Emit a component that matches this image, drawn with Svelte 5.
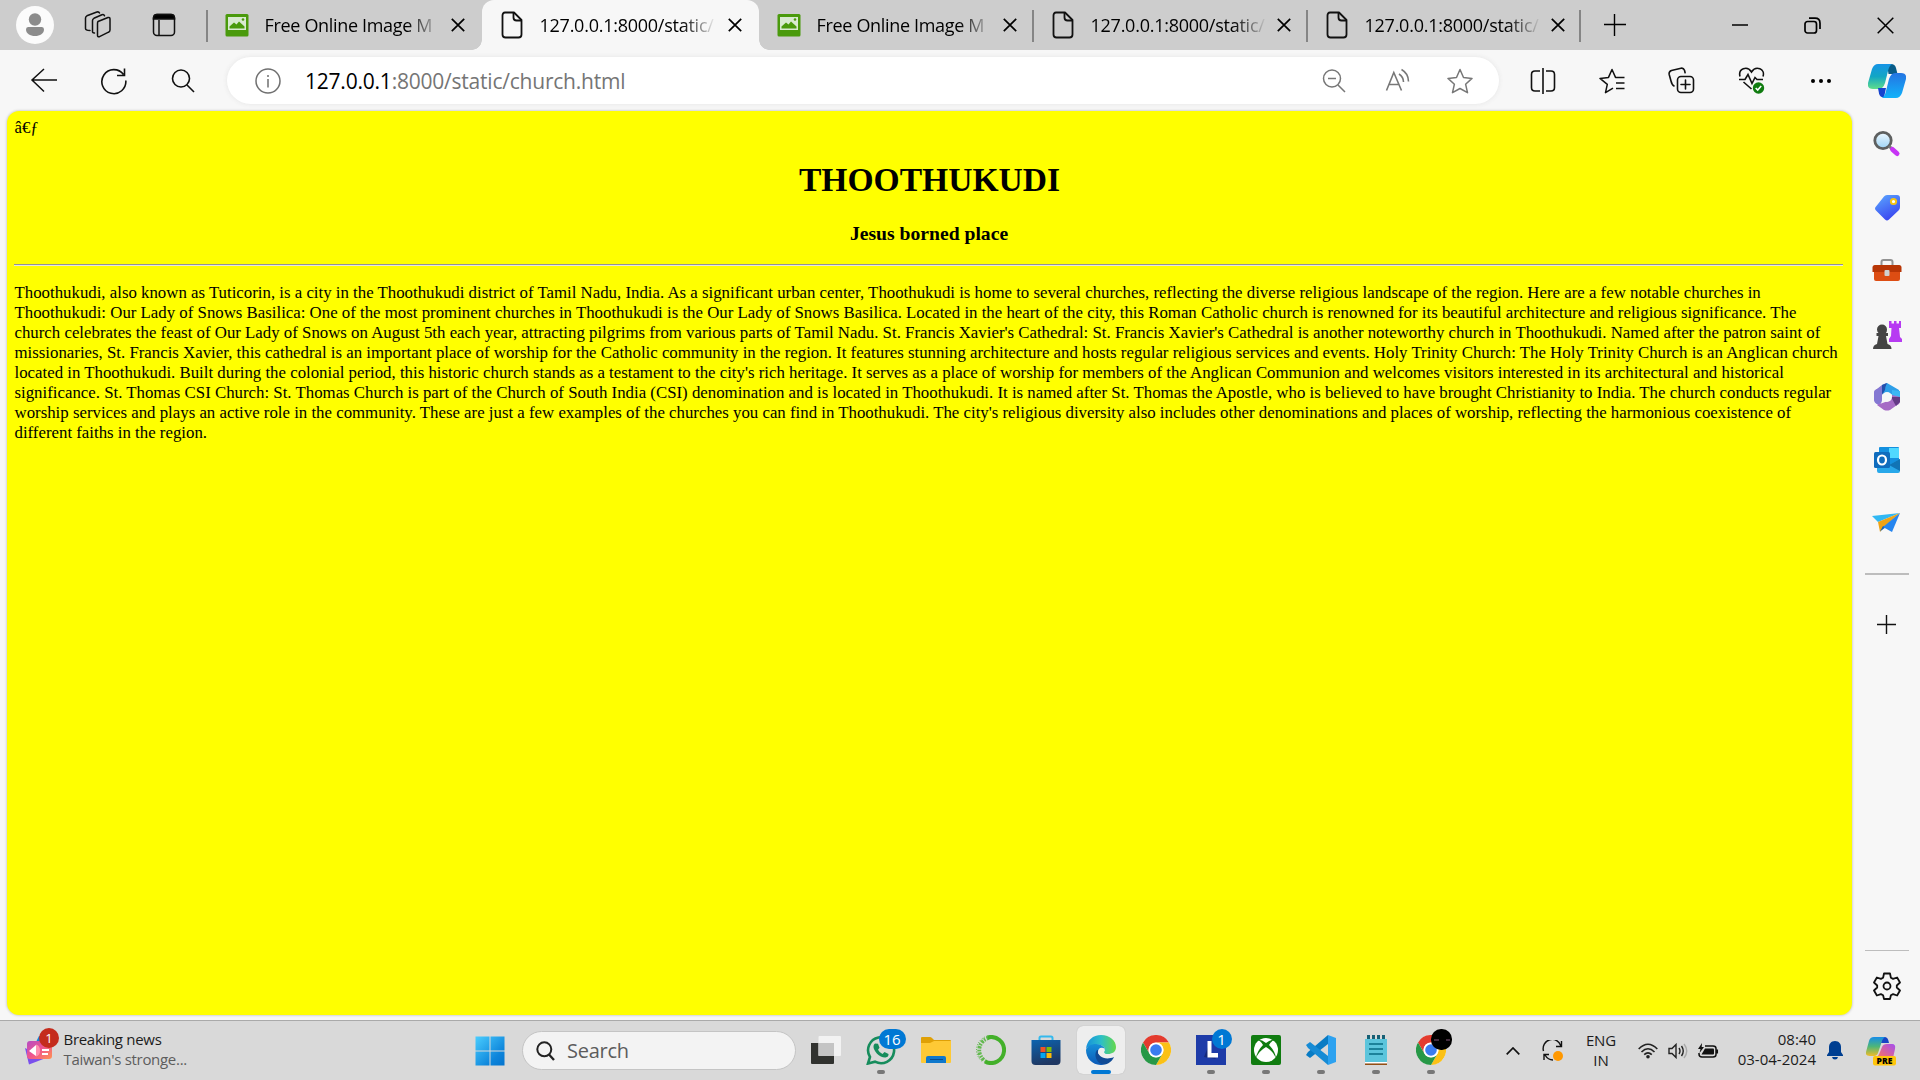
<script>
  const tabs = [
    { title: 'Free Online Image M', kind: 'image', active: false },
    { title: '127.0.0.1:8000/static/', kind: 'doc', active: true },
    { title: 'Free Online Image M', kind: 'image', active: false },
    { title: '127.0.0.1:8000/static/', kind: 'doc', active: false },
    { title: '127.0.0.1:8000/static/', kind: 'doc', active: false }
  ];
  const lines = [
    'Thoothukudi, also known as Tuticorin, is a city in the Thoothukudi district of Tamil Nadu, India. As a significant urban center, Thoothukudi is home to several churches, reflecting the diverse religious landscape of the region. Here are a few notable churches in',
    'Thoothukudi: Our Lady of Snows Basilica: One of the most prominent churches in Thoothukudi is the Our Lady of Snows Basilica. Located in the heart of the city, this Roman Catholic church is renowned for its beautiful architecture and religious significance. The',
    "church celebrates the feast of Our Lady of Snows on August 5th each year, attracting pilgrims from various parts of Tamil Nadu. St. Francis Xavier's Cathedral: St. Francis Xavier's Cathedral is another noteworthy church in Thoothukudi. Named after the patron saint of",
    'missionaries, St. Francis Xavier, this cathedral is an important place of worship for the Catholic community in the region. It features stunning architecture and hosts regular religious services and events. Holy Trinity Church: The Holy Trinity Church is an Anglican church',
    "located in Thoothukudi. Built during the colonial period, this historic church stands as a testament to the city's rich heritage. It serves as a place of worship for members of the Anglican Communion and welcomes visitors interested in its architectural and historical",
    'significance. St. Thomas CSI Church: St. Thomas Church is part of the Church of South India (CSI) denomination and is located in Thoothukudi. It is named after St. Thomas the Apostle, who is believed to have brought Christianity to India. The church conducts regular',
    "worship services and plays an active role in the community. These are just a few examples of the churches you can find in Thoothukudi. The city's religious diversity also includes other denominations and places of worship, reflecting the harmonious coexistence of",
    'different faiths in the region.'
  ];
  const apps = ['view', 'whatsapp', 'files', 'anaconda', 'store', 'edge', 'chrome', 'lapp', 'xbox', 'code', 'notes', 'chrome2'];
  const running = ['whatsapp', 'lapp', 'xbox', 'code', 'notes', 'chrome2'];
  const side = ['search', 'tag', 'case', 'chess', 'm365', 'outlook', 'plane'];
</script>

{#snippet chromeLogo()}
  <circle cx="15" cy="15" r="15" fill="#fff" />
  <path d="M2 7.5A15 15 0 0 1 28 7.500H15A7.500 7.500 0 0 0 8.500 18.750Z" fill="#e33b2e" />
  <path d="M28 7.500A15 15 0 0 1 15 30L21.500 18.750A7.500 7.500 0 0 0 15 7.500Z" fill="#fbc116" />
  <path d="M2 7.500A15 15 0 0 0 15 30L21.500 18.750A7.500 7.500 0 0 1 8.500 18.750Z" fill="#279847" />
  <circle cx="15" cy="15" r="7.300" fill="#fff" />
  <circle cx="15" cy="15" r="5.800" fill="#3a7cf0" />
{/snippet}

<div class="screen">
  <header class="strip">
    <div class="slot profile">
      <svg width="38" height="38" viewBox="0 0 38 38"><circle cx="19" cy="19" r="19" fill="#fbfbfb" /><circle cx="19" cy="13.500" r="6.200" fill="#8c8c8c" /><path d="M12 21h14q2 0 2 2.500c0 4-4 6.500-9 6.500s-9-2.500-9-6.500q0-2.500 2-2.500z" fill="#8c8c8c" /></svg>
    </div>
    <div class="slot spaces">
      <svg width="28" height="28" viewBox="0 0 28 28" fill="none" stroke="#111" stroke-width="1.500" stroke-linejoin="round" stroke-linecap="round">
        <path d="M14 10.500l10-4q2-.5 2 1.500v11q0 1.500-1.500 2.200l-9 4.500q-2 .6-2-1.500v-11.500q0-1.500.5-2.200z" />
        <path d="M10.500 22q-2 .2-2-1.600V9.500q0-1.500 1.400-2.200l8-3.600q2-.7 2.600 1" /><path d="M6 19.500q-4.500 0-4.500-2V7q0-1.500 1.400-2.200l10-3.800q2-.5 2.600 1" />
      </svg>
    </div>
    <div class="slot actions">
      <svg width="24" height="24" viewBox="0 0 24 24" fill="none" stroke="#111" stroke-width="1.500"><rect x="1.500" y="1.500" width="21" height="21" rx="3.500" /><path d="M1.500 6V5q0-3.500 3.500-3.500h14q3.500 0 3.500 3.500v1z" fill="#000" /><path d="M7 7v15" /></svg>
    </div>
    {#each tabs as tab, i}
      <div class="tab" class:active={tab.active} class:rule={i !== 1 && i !== 2}>
        {#if tab.kind === 'image'}
          <svg class="fav" width="24" height="24" viewBox="0 0 24 24"><rect x=".5" y="1" width="23" height="22.500" rx="1.500" fill="#4a9a0c" /><path d="M3 4h18v13H3z" fill="#d8ead0" /><path d="M4.500 15.500v-2l4.500-4 2.500 2 2.500-3 5.500 5v2z" fill="#4a9a0c" /><circle cx="18" cy="6.500" r="1.300" fill="#4a9a0c" /></svg>
        {:else}
          <svg class="fav" width="24" height="28" viewBox="0 0 24 28" fill="none" stroke="#111" stroke-width="1.800" stroke-linejoin="round"><path d="M5 1.500h9l7.500 7.500v14.500q0 3-3 3H5.500q-3 0-3-3v-19q0-3 2.500-3z" /><path d="M13.500 1.500v5q0 3 3 3h5" /></svg>
        {/if}
        <span class="title" class:addr={tab.kind === 'doc'}>{tab.title}</span>
        <svg class="x" width="14" height="14" viewBox="0 0 14 14" stroke="#000" stroke-width="1.700"><path d="M.8.8l12.400 12.400M13.200.8L.8 13.200" /></svg>
      </div>
    {/each}
    <div class="slot newtab"><svg width="22" height="22" viewBox="0 0 22 22" stroke="#000" stroke-width="1.400"><path d="M0 10.500h22M10.500 0v22" /></svg></div>
    <div class="wins">
      <svg width="16" height="16" viewBox="0 0 16 16" stroke="#000" stroke-width="1.500"><path d="M0 8h16" /></svg>
      <svg width="17" height="17" viewBox="0 0 17 17" fill="none" stroke="#000" stroke-width="1.700"><rect x="1" y="4.500" width="11.500" height="11.500" rx="2.500" /><path d="M5 1.200h6q5 0 5 5V12" /></svg>
      <svg width="17" height="17" viewBox="0 0 17 17" stroke="#000" stroke-width="1.500"><path d="M.7.7l15.600 15.600M16.300.7L.7 16.300" /></svg>
    </div>
  </header>

  <div class="toolbar">
    <div class="nav">
      <svg width="28" height="26" viewBox="0 0 28 26" fill="none" stroke="#111" stroke-width="1.500"><path d="M27 12H2M14 1L2 12 14 23.500" /></svg>
      <svg width="28" height="28" viewBox="0 0 28 28" fill="none" stroke="#111" stroke-width="1.600"><path d="M25.800 13.500A12 12 0 1 1 23.500 7.500M24.500 1.500v7h-7.500" /></svg>
      <svg width="26" height="26" viewBox="0 0 26 26" fill="none" stroke="#111" stroke-width="1.600"><circle cx="11" cy="10.500" r="8.500" /><path d="M17 17l7 7" /></svg>
    </div>
    <div class="omni">
      <svg width="26" height="26" viewBox="0 0 26 26" fill="none" stroke="#707070" stroke-width="1.500"><circle cx="13" cy="13" r="12" /><path d="M13 11v8.500M13 7v2" /></svg>
      <span class="url"><b>127.0.0.1</b>:8000/static/church.html</span>
      <div class="omni-icons">
        <svg width="26" height="26" viewBox="0 0 26 26" fill="none" stroke="#777" stroke-width="1.500"><circle cx="11" cy="10.500" r="8.500" /><path d="M17 17l7 7M7 10.500h8" /></svg>
        <svg width="26" height="26" viewBox="0 0 26 26" fill="none" stroke="#777" stroke-width="1.600"><path d="M2.500 22.500L9.800 4.500 17.500 22.500M5 16.500h10M15 6q4.500 3 4.500 8M17.500 1.500q7 4 7 12" /></svg>
        <svg width="26" height="26" viewBox="0 0 26 26" fill="none" stroke="#777" stroke-width="1.500" stroke-linejoin="round"><path d="M13 1.500l3.500 8 8.500.9-6.400 5.800 1.900 8.500L13 20.500l-7.500 4.200 1.900-8.500L1 10.400l8.500-.9z" /></svg>
      </div>
    </div>
    <div class="tools">
      <svg width="26" height="26" viewBox="0 0 26 26" fill="none" stroke="#111" stroke-width="1.600"><path d="M13 0v26M10 3H5Q1.500 3 1.500 6.500v13Q1.500 23 5 23h5M16 3h5q3.500 0 3.500 3.500v13q0 3.500-3.500 3.500h-5" /></svg>
      <svg width="26" height="26" viewBox="0 0 26 26" fill="none" stroke="#111" stroke-width="1.500" stroke-linejoin="round"><path d="M14 20.200l-7.500 4.500 1.800-8.300L1 10.400l8.500-1L13 1.500l3.500 7.900h9M17 15h8.500M17 20.500h8.500" /></svg>
      <svg width="27" height="27" viewBox="0 0 27 27" fill="none" stroke="#111" stroke-width="1.600" stroke-linecap="round"><rect x="9.500" y="9.500" width="16" height="16" rx="3.500" /><path d="M17.500 13v9M13 17.500h9M6 19Q4 18 3 14L1.200 7.500Q.6 4.500 3.500 3.500L13 1.200q2.500-.5 3.500 2l.6 2.500" /></svg>
      <svg width="27" height="29" viewBox="0 0 27 29" fill="none" stroke="#111" stroke-width="1.600"><path d="M2 10.500C0 3 9-1 13.500 6 18-1 27.500 3 25 10.500M1 13.500h6l3-5 4 9 3-6 2 2h6M5.500 16l8 7" /><circle cx="20.500" cy="22" r="5.700" fill="#107c10" stroke="none" /><path d="M17.700 22l2 2 3.500-4" stroke="#fff" /></svg>
      <svg class="more" width="22" height="6" viewBox="0 0 22 6"><circle cx="3" cy="3" r="2" /><circle cx="11" cy="3" r="2" /><circle cx="19" cy="3" r="2" /></svg>
    </div>
    <svg class="copilot" width="38" height="36" viewBox="0 0 38 36">
      <defs><linearGradient id="ca" x2="0" y2="1"><stop stop-color="#1694e6" /><stop offset=".5" stop-color="#12a6c4" /><stop offset="1" stop-color="#5fdd8b" /></linearGradient><linearGradient id="cb" x2="0" y2="1"><stop stop-color="#2474e2" /><stop offset="1" stop-color="#12b2fa" /></linearGradient></defs>
      <path d="M19 1h4q4 0 5 4l1.500 6h-9z" fill="#085c88" />
      <path d="M10 1h14q-3 2-4 7l-3 12q-2 6-6 6H5q-6 0-5-6L4 6q2-5 6-5z" fill="url(#ca)" />
      <path d="M10 25h8l-2 9.500q-4 0-5-4z" fill="#1644cf" />
      <path d="M27 10h6q6 0 5 6l-4 14q-2 5-6 5H14q3-2 4-7l3-12q2-6 6-6z" fill="url(#cb)" />
    </svg>
  </div>

  <div class="middle">
    <main class="page">
      <div class="mojibake">â€ƒ</div>
      <h1>THOOTHUKUDI</h1>
      <h3>Jesus borned place</h3>
      <hr />
      <div class="text">{#each lines as line}<div class="line">{line}</div>{/each}</div>
    </main>
    <aside class="side">
      {#each side as name}
        <svg class="sicon" width="30" height="30" viewBox="0 0 30 30">
          {#if name === 'search'}
            <defs><linearGradient id="lens" x2="0" y2="1"><stop stop-color="#eef8ff" /><stop offset="1" stop-color="#9dd4f5" /></linearGradient></defs>
            <circle cx="11" cy="11.500" r="8.200" fill="url(#lens)" stroke="#5e6060" stroke-width="2.800" /><path d="M17 17l4 4" stroke="#777" stroke-width="3" /><path d="M20.500 20.500l4.500 4" stroke="#c734f5" stroke-width="5" stroke-linecap="round" />
          {:else if name === 'tag'}
            <defs><linearGradient id="tg" x2=".5" y2="1"><stop stop-color="#5caaff" /><stop offset="1" stop-color="#3b48f0" /></linearGradient></defs>
            <path d="M15 3h10q3 0 3 3v9q0 2-1.500 3.500l-9.500 9q-2 2-4 0l-9-9q-2-2 0-4L12 4.500q1-1.500 3-1.500z" fill="url(#tg)" /><circle cx="21.500" cy="9.500" r="2.600" fill="#fff" stroke="#f5c414" stroke-width="2" />
          {:else if name === 'case'}
            <path d="M9.500 10V7q0-2 2-2h7q2 0 2 2v3" fill="none" stroke="#929292" stroke-width="2" /><rect x="2" y="10" width="26" height="16" rx="2" fill="#dd4d13" /><path d="M.5 12.500Q.5 10 3 10h24q2.500 0 2.500 2.500V17H.5z" fill="#b83606" /><rect x="12.500" y="15" width="5" height="6" rx="1" fill="#d0d0d0" />
          {:else if name === 'chess'}
            <path d="M17 2h2.500v2.500H22V2h2.500v2.500H27V2h2v7h-2l1 9 2 2v3H17v-3l2-3 .5-8H17z" fill="#b73bf2" /><path d="M5 10.500a5 5 0 0 1 10 0q0 2-1 3.500h2v3h-2l1.500 8q4 1 4 5H1q0-4 4-5l1.500-8h-2v-3h2Q5 12.500 5 10.500z" fill="#444" />
          {:else if name === 'm365'}
            <path d="M10 3l5-2 12 7v9l-8-5q-4-2-8 1z" fill="#2e9fe8" /><path d="M15 1q-5 1-5 6v10q0 4-3 7l-3-3q-2-1.500-2-4V11q0-3 3-4z" fill="#9c79da" /><path d="M10 3v14q0 5-5 5-3-1-3-5v-6q0-3 3-4z" fill="#8478d2" /><path d="M10 3l5-2q-2 4-2 7l-3 5z" fill="#2450ac" /><path d="M28 11v8q0 3-3 4l-7 5q-3 1-6 0l-7-5 11-4q4-2 4-6z" fill="#a66bc5" /><path d="M28 9v6l-8-2V8z" fill="#3cb7f4" /><path d="M28 15v5l-4 4-5-9z" fill="#643a86" /><circle cx="15" cy="15" r="5" fill="#f7f7f7" />
          {:else if name === 'outlook'}
            <rect x="7" y="2" width="20" height="18" rx="1" fill="#1490df" /><path d="M17 3h10v10H17z" fill="#50d9ff" /><path d="M5 17l12 3 11-6v12q0 2-2 2H7q-2 0-2-2z" fill="#28a8ea" /><path d="M17 20l11-6v12z" fill="#1174b5" /><rect x="2" y="7" width="16" height="16" rx="1.500" fill="#0f6cbd" /><ellipse cx="10" cy="15" rx="4" ry="4.500" fill="none" stroke="#fff" stroke-width="2.200" />
          {:else}
            <path d="M0 8l28-3-22 9z" fill="#31b8f3" /><path d="M6 14L28 5 11 20l-3 4z" fill="#efa315" /><path d="M11 18l-3 5.500 6-4.500z" fill="#155fb0" /><path d="M28 5l-8 19-9-5z" fill="#2585ef" />
          {/if}
        </svg>
      {/each}
      <div class="srule thick"></div>
      <svg class="plus" width="19" height="19" viewBox="0 0 19 19" stroke="#111" stroke-width="1.400"><path d="M0 9.500h19M9.500 0v19" /></svg>
      <div class="srule low"></div>
      <svg class="gear" width="28" height="28" viewBox="0 0 28 28" fill="none" stroke="#111" stroke-width="1.800" stroke-linejoin="round"><path d="M11 1.500h6l.9 4.200 2.200 1.200 4-1.400 2.900 5-3.200 3v2l3.200 3-2.900 5-4-1.400-2.200 1.200-.9 3.700h-6l-.9-3.700-2.200-1.200-4 1.400-2.900-5 3.200-3v-2l-3.200-3 2.900-5 4 1.400 2.200-1.200z" /><circle cx="14" cy="14" r="3.500" /></svg>
    </aside>
  </div>

  <footer class="taskbar">
    <div class="news">
      <div class="newsicon">
        <svg width="28" height="30" viewBox="0 0 28 30"><defs><linearGradient id="nw" x2="1" y2="1"><stop stop-color="#b54bc4" /><stop offset=".5" stop-color="#f0558e" /><stop offset="1" stop-color="#ff9350" /></linearGradient></defs><path d="M0 13l21 10-17 6.500z" fill="#7a50ec" /><path d="M14 1h10v8H10z" fill="#1683d8" /><rect x="2" y="6" width="25" height="18" rx="3" fill="url(#nw)" /><path d="M11 9.500q4 1 4 6t-4 6z" fill="#ff8fb0" /><path d="M4 16l7-6v11z" fill="#fff" /><path d="M17 15h7M17 19h6" stroke="#fff" stroke-width="1.800" /></svg>
        <span class="count">1</span>
      </div>
      <div class="newstext"><div>Breaking news</div><div class="dim">Taiwan's stronge...</div></div>
    </div>
    <svg class="start" width="30" height="30" viewBox="0 0 30 30"><defs><linearGradient id="wn" gradientUnits="userSpaceOnUse" x1="0" y1="0" x2="30" y2="30"><stop stop-color="#4ccfff" /><stop offset=".7" stop-color="#0d85db" /><stop offset="1" stop-color="#0473cd" /></linearGradient></defs><path d="M.5.5h14v14H.5zM15.500.5h14v14h-14zM.5 15.500h14v14H.5zM15.500 15.500h14v14h-14z" fill="url(#wn)" /></svg>
    <div class="search">
      <svg width="19" height="20" viewBox="0 0 19 20" fill="none" stroke="#222" stroke-width="2"><circle cx="8.300" cy="8.300" r="7" /><path d="M13 13.500l5 5.500" stroke-width="2.300" /></svg>
      <span>Search</span>
    </div>
    <div class="apps">
      {#each apps as app}
        <div class="app" class:current={app === 'edge'}>
          <svg width="30" height="30" viewBox="0 0 30 30">
            {#if app === 'view'}
              <path d="M0 8h23v20q0 1-1 1H1q-1 0-1-1z" fill="#31322f" /><rect x="7.500" y="1" width="22.500" height="20" rx="1" fill="#f2f2f2" /><path d="M7.500 8H23v13H7.500z" fill="#c4c4c4" />
            {:else if app === 'whatsapp'}
              <path d="M2 28.500l2-6.500a13 13 0 1 1 5 4.700z" fill="none" stroke="#168c5c" stroke-width="2.600" /><path d="M9 8.500l3 .2 1.500 4-1.500 2q1.500 3 4.500 4.200l2-1.800 4 2q.3 3-3 3.500C14 23 7 16 7.500 11q.3-1.700 1.500-2.500z" fill="#168c5c" />
            {:else if app === 'files'}
              <path d="M0 3q0-1 1-1h8q1 0 2 1l2 2h16q1 0 1 1v5H0z" fill="#dfa006" /><path d="M0 8h9l4-2h17v21q0 1-1 1H1q-1 0-1-1z" fill="#fec935" /><path d="M5 28v-5q0-2 2-2h16q2 0 2 2v5z" fill="#0f78cc" /><path d="M9 24.500h13" stroke="#084c8e" />
            {:else if app === 'anaconda'}
              <path d="M8 28.200A14.800 14.800 0 1 0 10 1" fill="none" stroke="none" /><path d="M11.500 2.500A13 13 0 1 1 9 26.500" fill="none" stroke="#43b02a" stroke-width="4" /><path d="M13 3A12.500 12.500 0 0 0 9.500 26" fill="none" stroke="#43b02a" stroke-width="3.800" stroke-dasharray="2.500 1.300 1.500 1" opacity=".8" /><path d="M11 1.200A14.400 14.400 0 0 0 7 27" fill="none" stroke="#43b02a" stroke-width="1" stroke-dasharray="1 1.500" />
            {:else if app === 'store'}
              <defs><linearGradient id="st" x2=".3" y2="1"><stop stop-color="#0c64b0" /><stop offset="1" stop-color="#1f3863" /></linearGradient></defs>
              <path d="M8.500 6V3q0-1.500 1.500-1.500h10q1.500 0 1.500 1.500v3" fill="none" stroke="#35b9ed" stroke-width="2" /><path d="M.5 5h29v21q0 4-4 4h-21q-4 0-4-4z" fill="url(#st)" /><path d="M9.500 12h5v5h-5z" fill="#f35325" /><path d="M15.500 12h5v5h-5z" fill="#81bc06" /><path d="M9.500 18h5v5h-5z" fill="#05a6f0" /><path d="M15.500 18h5v5h-5z" fill="#ffba08" />
            {:else if app === 'edge'}
              <defs><linearGradient id="ea"><stop stop-color="#1690dc" /><stop offset=".5" stop-color="#2cbfc8" /><stop offset="1" stop-color="#65d84b" /></linearGradient><linearGradient id="eb" x2="0" y2="1"><stop stop-color="#1690d8" /><stop offset="1" stop-color="#0c5ab8" /></linearGradient></defs>
              <path d="M0 14C1 5 7 0 15 0c9 0 15 6 15 12 0 5-4 7-8 7-5 0-4-2-3-4 0-4-5-6-9-5-5 0-9 2-10 4z" fill="url(#ea)" /><path d="M0 15c1-4 5-6 10-6 5 0 9 3 9 6-2-2-7-1-7 4 0 5 5 11 7 10.500C9 32 0 25 0 15z" fill="url(#eb)" /><path d="M11 15c-4 5 0 15 8 14.500 5-1 8-5 9-7.500-9 4-17-1-16-7z" fill="#104b96" /><path d="M12 17c0-3 2-5 5-4 2 0 2 2 1 3-1 3 3 4 6 3.500-5 2-12 1.500-12-2.500z" fill="#eee" />
            {:else if app === 'chrome' || app === 'chrome2'}
              {@render chromeLogo()}
            {:else if app === 'lapp'}
              <path d="M0 0h30v30H0z" fill="#1d3ba8" /><path d="M8 22l4-10 8 12z" fill="#15297a" /><path d="M11.500 6h4v12H22v4.500H11.500z" fill="#fff" />
            {:else if app === 'xbox'}
              <rect width="30" height="30" rx="2" fill="#107c10" /><circle cx="15" cy="15" r="12" fill="#fff" /><path d="M6 5q4-1 9 3 5-4 9-3-3 0-6 5 6 6 7 13-3-7-10-11Q8 16 5 23q1-7 7-13-3-5-6-5z" fill="#107c10" />
            {:else if app === 'code'}
              <path d="M22 0l8 3v24l-8 3z" fill="#2da2f0" /><path d="M22 0v9L4 23l-4-3 2-3z" fill="#087bc4" /><path d="M22 30v-9L4 7 0 10l2 3z" fill="#168bd5" />
            {:else if app === 'notes'}
              <path d="M4 4h22v23H4z" fill="#5cc5dc" /><path d="M4 27h22v1.500H4z" fill="#fff" /><path d="M4 28.500h22V30H4z" fill="#934f15" /><path d="M6 2h3M11 2h3M16 2h3M21 2h3" stroke="#176075" stroke-width="4" /><path d="M8 9h14M8 14h14M8 19h14" stroke="#076c84" stroke-width="1.600" />
            {/if}
          </svg>
          {#if app === 'whatsapp'}<span class="badge wide">16</span>{/if}
          {#if app === 'lapp'}<span class="badge">1</span>{/if}
          {#if app === 'chrome2'}<span class="badge avatar"><svg width="21" height="21" viewBox="0 0 21 21"><path d="M3 11h5M15 11h4" stroke="#84577a" /></svg></span>{/if}
          {#if running.includes(app)}<i class="dot"></i>{/if}
          {#if app === 'edge'}<i class="dot on"></i>{/if}
        </div>
      {/each}
    </div>
    <div class="tray">
      <svg class="chev" width="14" height="8" viewBox="0 0 14 8" fill="none" stroke="#111" stroke-width="1.700"><path d="M.7 7.300L7 1l6.300 6.300" /></svg>
      <svg class="sync" width="22" height="22" viewBox="0 0 22 22" fill="none" stroke="#111" stroke-width="1.400"><path d="M1.500 11A9 9 0 0 1 19 6M19.500 1v5.500H14M2 20v-5.500h5M3 15q3 5 8 5" /><circle cx="16" cy="16" r="5" fill="#ff9800" stroke="none" /></svg>
      <div class="lang"><div>ENG</div><div>IN</div></div>
      <div class="status">
        <svg width="20" height="16" viewBox="0 0 20 16" fill="none" stroke="#222" stroke-width="1.600"><path d="M.7 6Q10-3.500 19.300 6M3.500 9Q10 2.500 16.500 9M6.200 11.700q3.800-3.600 7.600 0" /><circle cx="10" cy="13.700" r="1.800" fill="#222" stroke="none" /></svg>
        <svg width="20" height="16" viewBox="0 0 20 16" fill="none" stroke="#222" stroke-width="1.400"><path d="M1 5.500h3l4-4v13l-4-4H1zM11 5q2 3 0 6M13.500 3q3.500 5 0 10" /><path d="M16 1q5.500 7 0 14" stroke="#aaa" /></svg>
        <svg width="21" height="16" viewBox="0 0 21 16" fill="none" stroke="#111" stroke-width="1.500"><path d="M7 3h8q3 0 3 2.500v6q0 2.500-3 2.500H4q-3 0-3-3V10M19.300 6.500v4" /><path d="M7 5.500h8q1 0 1 1v4q0 1-1 1H3.500z" fill="#111" stroke="none" /><path d="M4 0L0 6h2.500L1.500 10 6 4H3.700z" fill="#111" stroke="none" /></svg>
      </div>
      <div class="clock"><div>08:40</div><div>03-04-2024</div></div>
      <svg class="bell" width="16" height="19" viewBox="0 0 16 19" fill="#003f91"><path d="M8 0c4 0 6 3 6 6v5l2 3v1H0v-1l2-3V6c0-3 2-6 6-6zM5 16h6q-.5 2.500-3 2.500T5 16z" /></svg>
      <svg class="pre" width="30" height="30" viewBox="0 0 30 30"><defs><linearGradient id="pa" x2="0" y2="1"><stop stop-color="#168de8" /><stop offset=".5" stop-color="#4eb678" /><stop offset="1" stop-color="#f0bc28" /></linearGradient><linearGradient id="pb" x1="1" x2="0" y2="1"><stop stop-color="#a44df0" /><stop offset="1" stop-color="#ff7658" /></linearGradient></defs><path d="M16 1h3q3 0 4 6h-8z" fill="#1745c4" /><path d="M8 1h11q-3 2-4 7l-3 9q-1 3-4 3H4q-5 0-4-4L3 5q1-4 5-4z" fill="url(#pa)" /><path d="M21 8h5q4 0 3 5l-2 9H10q2-1 4-6l2-5q1-3 5-3z" fill="url(#pb)" /><rect x="7" y="20" width="23" height="9.500" rx="2" fill="#ffc60b" /><text x="18.500" y="27.600" text-anchor="middle" class="pretext">PRE</text></svg>
    </div>
  </footer>
</div>

<style>
  :global(body) { margin: 0; overflow: hidden; }
  .screen { width: 1920px; height: 1080px; display: flex; flex-direction: column; background: #f7f7f7; font-family: 'Open Sans', 'Noto Sans', sans-serif; color: #000; overflow: hidden; }
  svg { display: block; flex: none; }
  .strip { height: 50px; flex: none; display: flex; align-items: center; background: #cdcdcd; }
  .slot { display: flex; justify-content: center; flex: none; }
  .profile { width: 70px; }
  .spaces { width: 56px; }
  .actions { width: 81px; padding-right: 5px; box-sizing: border-box; }
  .tab { width: 274px; height: 50px; flex: none; box-sizing: border-box; display: flex; align-items: center; padding-left: 18px; position: relative; }
  .tab:nth-child(4) { width: 275px; }
  .rule::before { content: ''; position: absolute; left: -1px; top: 10px; width: 2px; height: 32px; background: #858585; }
  .tab:nth-last-child(3)::after { content: ''; position: absolute; right: 0; top: 10px; width: 2px; height: 32px; background: #858585; }
  .active { background: #f7f7f7; border-radius: 12px 12px 0 0; width: 277px; }
  .active .title { width: 176px; }
  .active::before, .active::after { content: ''; position: absolute; bottom: 0; width: 10px; height: 10px; }
  .active::before { left: -10px; background: radial-gradient(circle at 0 0, #cdcdcd 9.500px, #f7f7f7 10px); }
  .active::after { right: -10px; background: radial-gradient(circle at 100% 0, #cdcdcd 9.500px, #f7f7f7 10px); }
  .title { width: 174px; margin-left: 15.500px; font-size: 18px; line-height: 26px; letter-spacing: -0.330px; white-space: nowrap; mask-image: linear-gradient(90deg, #000 142px, transparent 176px); }
  .addr { letter-spacing: -0.250px; }
  .x { margin-left: 12.500px; }
  .newtab { width: 68px; }
  .wins { margin-left: auto; display: flex; align-items: center; gap: 56px; padding-right: 26px; }

  .toolbar { height: 61px; flex: none; display: flex; align-items: center; }
  .nav { width: 227px; display: flex; align-items: center; gap: 42px; padding-left: 30px; box-sizing: border-box; flex: none; }
  .omni { width: 1272px; height: 47px; border-radius: 24px; background: #fff; box-shadow: 0 0 5px #e4e4e4; display: flex; align-items: center; padding: 0 26px 0 28px; box-sizing: border-box; flex: none; }
  .url { margin-left: 24px; font-size: 21px; color: #757575; letter-spacing: -0.220px; white-space: nowrap; }
  .url b { font-weight: 400; color: #000; }
  .omni-icons { display: flex; gap: 37px; margin-left: auto; }
  .tools { display: flex; align-items: center; gap: 43px; margin-left: 31px; }
  .more { margin-left: 2px; }
  .copilot { margin-left: auto; margin-right: 14px; }

  .middle { height: 909px; flex: none; display: flex; }
  .page { width: 1845px; height: 904px; margin-left: 7px; box-sizing: border-box; padding: 7px 9px 0 7px; background: #ff0; border-radius: 12px; box-shadow: 0 0 2px 1px #d5d5d5; font-family: 'Liberation Serif', serif; font-size: 16.820px; flex: none; }
  .mojibake { line-height: 19px; height: 19px; padding-left: .5px; }
  h1 { font-size: 33.600px; line-height: 38px; margin: 24px 0 0 2px; text-align: center; }
  h3 { font-size: 19.650px; line-height: 22px; margin: 23px 0 0 1px; text-align: center; }
  hr { height: 2px; border: 0; margin: 20px 0 0; background: linear-gradient(#929298 50%, #e6e6e0 50%); }
  .text { margin-top: 17px; padding-left: .5px; }
  .line { line-height: 20px; white-space: nowrap; width: max-content; }

  .side { width: 68px; display: flex; flex-direction: column; align-items: center; padding: 18px 0 0 1px; box-sizing: border-box; }
  .sicon { margin-bottom: 33.200px; }
  .srule { width: 44px; height: 1px; background: #bdbdbd; flex: none; }
  .thick { height: 2px; margin-top: 2px; }
  .plus { margin-top: 40px; margin-right: 1px; }
  .low { margin-top: auto; }
  .gear { margin: 21px 0 20px; }

  .taskbar { height: 60px; flex: none; display: flex; align-items: center; background: #d9d9d9; border-top: 1px solid #aaa; box-sizing: border-box; }
  .news { width: 475px; display: flex; align-items: center; padding-left: 25px; box-sizing: border-box; flex: none; }
  .newsicon { position: relative; width: 38.500px; height: 30px; }
  .newsicon svg { margin-top: -1px; }
  .count { position: absolute; left: 14px; top: -8px; width: 20px; height: 20px; border-radius: 50%; background: #c42b1c; color: #fff; font-size: 13px; line-height: 20px; text-align: center; }
  .newstext { font-size: 15px; line-height: 20px; letter-spacing: -0.300px; color: #1c1c1c; white-space: nowrap; margin-top: -3px; }
  .dim { color: #5d5d5d; }
  .search { width: 274px; height: 39px; margin-left: 17px; border-radius: 20px; box-sizing: border-box; border: 1px solid #c4c4c4; background: #f3f3f3; display: flex; align-items: center; padding-left: 13px; gap: 12px; flex: none; font-size: 20px; color: #5c5c5c; letter-spacing: -0.250px; }
  .apps { display: flex; margin-left: 2.500px; }
  .app { width: 55px; height: 48px; display: flex; align-items: center; justify-content: center; position: relative; top: -1px; flex: none; }
  .current { width: 48px; margin: 0 3.500px; background: #eee; border-radius: 6px; box-shadow: 0 0 1px #aaa; }
  .badge { position: absolute; left: 28px; top: 3px; width: 20px; height: 20px; border-radius: 10px; background: #0078d4; color: #fff; font-size: 15px; line-height: 20px; text-align: center; }
  .wide { width: 27px; left: 25px; }
  .avatar { background: #000; left: 27px; width: 21px; height: 21px; }
  .dot { position: absolute; bottom: 0; width: 8px; height: 4px; border-radius: 2px; background: #777; }
  .on { width: 20px; background: #0078d4; }
  .tray { display: flex; align-items: center; margin-left: auto; padding-right: 24px; color: #1c1c1c; font-size: 15px; line-height: 20px; }
  .sync { margin-left: 22.500px; }
  .lang { width: 50px; text-align: center; margin: -2px 0 0 12px; letter-spacing: -0.100px; }
  .status { display: flex; gap: 10px; margin-left: 12px; }
  .clock { width: 97px; text-align: right; letter-spacing: 0; white-space: nowrap; margin-top: -3px; }
  .bell { margin-left: 11px; }
  .pre { margin-left: 23px; }
  .pretext { font: 800 8.500px 'Open Sans', sans-serif; }
</style>
